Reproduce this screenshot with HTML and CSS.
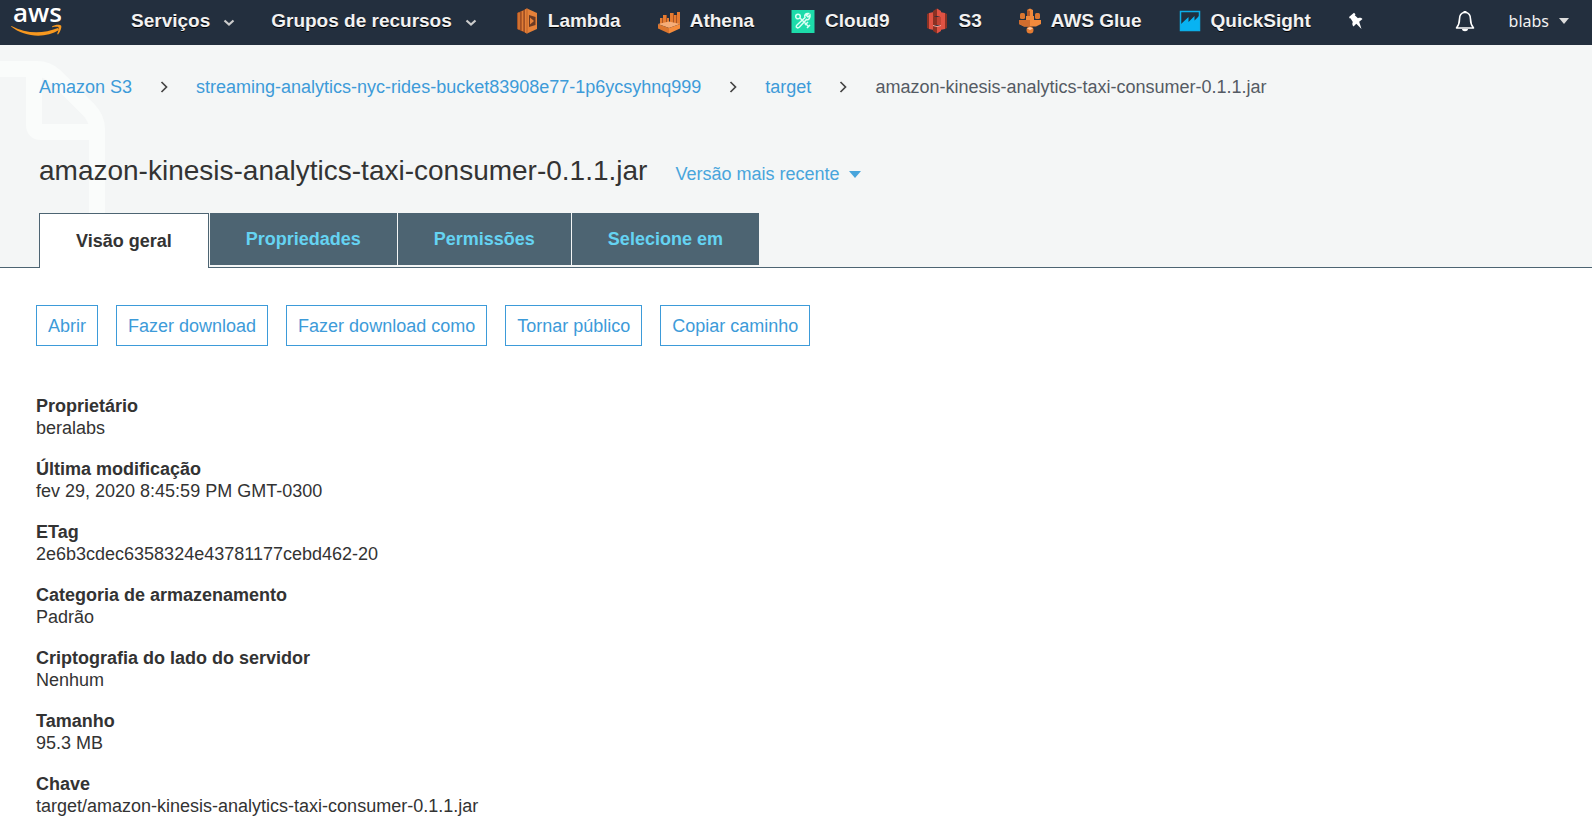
FILE: index.html
```html
<!DOCTYPE html>
<html lang="pt-BR">
<head>
<meta charset="utf-8">
<meta name="viewport" content="width=device-width, initial-scale=1">
<title>Amazon S3</title>
<link rel="stylesheet" href="styles.css">
</head>
<body>
<header class="topbar">
  <a class="logo" href="#" aria-label="AWS">
    <svg width="54" height="38" viewBox="0 0 54 38">
      <text class="logo-text" x="3" y="20">aws</text>
      <path d="M1 24.500C14 35 35 37 49 28l-1-2C33 32 16 32 1.500 24z" fill="#f7981f"/>
      <path d="M42 24.500c3-2 8-2 9-1 1 1-.3 6-3 9l-.8-.4c1-2.500 2-6 1.300-6.800-.8-.7-4-.4-6.300-.1z" fill="#f7981f"/>
    </svg>
  </a>
  <nav class="menus" aria-label="Principal">
    <button class="menu" type="button">Serviços
      <svg class="chev" width="12" height="8" viewBox="0 0 12 8"><path d="M1.500 1.500 6 5.500l4.500-4" fill="none" stroke="#ccc" stroke-width="2.200"/></svg>
    </button>
    <button class="menu" type="button">Grupos de recursos
      <svg class="chev" width="12" height="8" viewBox="0 0 12 8"><path d="M1.500 1.500 6 5.500l4.500-4" fill="none" stroke="#ccc" stroke-width="2.200"/></svg>
    </button>
  </nav>
  <nav class="shortcuts" aria-label="Atalhos">
    <a class="shortcut" href="#">
      <svg width="22" height="26" viewBox="0 0 22 26"><path d="M1 5l10-4.500v25L1 21z" fill="#a35024"/><path d="M3 4.500v17M6.500 3v20" stroke="#e07c35" stroke-width="1.500"/><path d="M9 1.500l2-1L21 5v16l-10 4.500-2-1z" fill="#e58139"/><path d="M11 .5v25" stroke="#bf6329"/><path d="M13 7l6.500 2v8L13 19z" fill="#6b3a24"/><path d="M14 9.500l4 3.500-4 3.500z" fill="#e58139"/></svg>
      Lambda</a>
    <a class="shortcut" href="#">
      <svg width="22" height="26" viewBox="0 0 22 26"><path d="M2 10h2v7l-2-1zM5 7h3v11l-3-1zM9 10h2v8H9zM12 5h3v12l-3 1zM16 7h2v10h-2zM19 4h3v12h-3z" fill="#e57c32"/><path d="M4.500 10v7M8.500 7v11M15.500 5v12M18.500 7v9" stroke="#a85424"/><path d="M0 16l11-2.500L22 16l-11 4z" fill="#f6ad78"/><path d="M0 16l11 4v5.500L0 20.500z" fill="#db762f"/><path d="M11 20l11-4v4.500l-11 5z" fill="#f58c3c"/></svg>
      Athena</a>
    <a class="shortcut" href="#">
      <svg width="24" height="26" viewBox="0 0 24 26"><path d="M.5 2h23v23H.5z" fill="#1ddbaa"/><g fill="none" stroke="#d8fff3" stroke-width="1.500"><circle cx="7" cy="8.500" r="2.300"/><path d="M9 10l8 8M16 20l3-3M14 17l3-3"/><path d="M19 7l-2 2-1.500-1.500 2-2c-3-.5-4.500 2-3.500 4L6 17c-2 2 .5 4 2.500 2l7-7.500c2 1 4-1.500 3.500-4.500z"/></g></svg>
      Cloud9</a>
    <a class="shortcut" href="#">
      <svg width="22" height="26" viewBox="0 0 22 26"><path d="M1 6l2-1v16l-2-1z" fill="#8c3123"/><path d="M3 5l5-1v18l-5-1z" fill="#e05243"/><path d="M21 6l-2-1v16l2-1z" fill="#8c3123"/><path d="M19 5l-5-1v18l5-1z" fill="#e05243"/><path d="M7 3l4-2.500V8L7 9z" fill="#8c3123"/><path d="M11 .5L15 3v6l-4-1z" fill="#e05243"/><path d="M7 9h4v8H7z" fill="#8c3123"/><path d="M11 9h4v8h-4z" fill="#c24334"/><path d="M7 17l4 1 4-1v2H7z" fill="#f3a99e"/><path d="M7 18l4 1v6.500L7 23z" fill="#8c3123"/><path d="M11 19l4-1v5l-4 2.500z" fill="#e05243"/></svg>
      S3</a>
    <a class="shortcut" href="#">
      <svg width="22" height="26" viewBox="0 0 22 26"><path d="M0 12h22v4l-5 2.500H5L0 16z" fill="#f28a3c"/><path d="M0 12h11v6.500H5L0 16z" fill="#d06d2e"/><rect x="1" y="5" width="5" height="6" rx="1.500" fill="#db7630"/><rect x="16" y="5" width="5" height="6" rx="1.500" fill="#db7630"/><path d="M8 2l3-1.500L14 2v9H8z" fill="#f28a3c"/><path d="M8 2l3 1v8H8z" fill="#b65a27"/><path d="M7 8h8v4H7z" fill="#f28a3c"/><circle cx="11" cy="22" r="3.500" fill="#e57c32"/><path d="M8 20.500l3-1.500 3 1.500-3 1.500z" fill="#ffc79d"/></svg>
      AWS Glue</a>
    <a class="shortcut" href="#">
      <svg width="22" height="26" viewBox="0 0 22 26"><path d="M1.500 3.500h19v19h-19z" fill="#20303f" stroke="#0caee8" stroke-width="1.500"/><path d="M2 16l7.500-7v5l6-6v4.500L20 8v14H2z" fill="#08b3f2"/></svg>
      QuickSight</a>
    <button class="pin" type="button" aria-label="Fixar atalhos">
      <svg width="16" height="18" viewBox="0 0 16 18"><path d="M1 5L6 .8l1.500 1.500-.7 1L10 6.200c1.500-.8 3.500-.5 4.500.8l-3.300 2.800L13.500 17 8.300 11.800 5.500 14.500C4.200 13.300 4 11.500 4.800 10L2.500 6.300 1.800 6.500z" fill="#fff"/></svg>
    </button>
  </nav>
  <div class="account">
    <button class="bell" type="button" aria-label="Notificações">
      <svg width="20" height="22" viewBox="0 0 20 22"><path d="M10 2.500c-4 0-5.500 3-5.500 6.500 0 5-1 6.500-3 9h17c-2-2.500-3-4-3-9 0-3.500-1.500-6.500-5.500-6.500z" fill="none" stroke="#fff" stroke-width="1.600" stroke-linejoin="round"/><path d="M8.500 1h3v2h-3zM7 19h6c0 3-6 3-6 0z" fill="#fff"/></svg>
    </button>
    <button class="user" type="button">blabs
      <svg width="10" height="6" viewBox="0 0 10 6"><path d="M0 0h10L5 6z" fill="#ddd"/></svg>
    </button>
  </div>
</header>
<main>
  <section class="hero">
    <svg class="file-art" width="106" height="162" viewBox="0 0 106 162" aria-hidden="true"><path d="M0 8h37q10 0 18 7l33 33q9 9 9 20v102M34 8v56q0 7 7 7h56" fill="none" stroke="#fafcfb" stroke-width="16"/></svg>
    <nav class="crumbs" aria-label="Localização">
      <a href="#">Amazon S3</a>
      <svg class="sep" width="8" height="12" viewBox="0 0 8 12"><path d="M1.500 1l5 5-5 5" fill="none" stroke="#444" stroke-width="1.700"/></svg>
      <a href="#">streaming-analytics-nyc-rides-bucket83908e77-1p6ycsyhnq999</a>
      <svg class="sep" width="8" height="12" viewBox="0 0 8 12"><path d="M1.500 1l5 5-5 5" fill="none" stroke="#444" stroke-width="1.700"/></svg>
      <a href="#">target</a>
      <svg class="sep" width="8" height="12" viewBox="0 0 8 12"><path d="M1.500 1l5 5-5 5" fill="none" stroke="#444" stroke-width="1.700"/></svg>
      <span>amazon-kinesis-analytics-taxi-consumer-0.1.1.jar</span>
    </nav>
    <div class="heading">
      <h1>amazon-kinesis-analytics-taxi-consumer-0.1.1.jar</h1>
      <button class="version" type="button">Versão mais recente
        <svg width="12" height="7" viewBox="0 0 12 7"><path d="M0 0h12L6 7z" fill="#48a5dc"/></svg>
      </button>
    </div>
    <div class="tabs" role="tablist">
      <button class="tab active" type="button" role="tab" aria-selected="true">Visão geral</button>
      <button class="tab" type="button" role="tab" aria-selected="false">Propriedades</button>
      <button class="tab" type="button" role="tab" aria-selected="false">Permissões</button>
      <button class="tab" type="button" role="tab" aria-selected="false">Selecione em</button>
    </div>
  </section>
  <section class="content">
    <div class="actions">
      <button class="action" type="button">Abrir</button>
      <button class="action" type="button">Fazer download</button>
      <button class="action" type="button">Fazer download como</button>
      <button class="action" type="button">Tornar público</button>
      <button class="action" type="button">Copiar caminho</button>
    </div>
    <dl class="details">
      <div><dt>Proprietário</dt><dd>beralabs</dd></div>
      <div><dt>Última modificação</dt><dd>fev 29, 2020 8:45:59 PM GMT-0300</dd></div>
      <div><dt>ETag</dt><dd>2e6b3cdec6358324e43781177cebd462-20</dd></div>
      <div><dt>Categoria de armazenamento</dt><dd>Padrão</dd></div>
      <div><dt>Criptografia do lado do servidor</dt><dd>Nenhum</dd></div>
      <div><dt>Tamanho</dt><dd>95.3 MB</dd></div>
      <div><dt>Chave</dt><dd>target/amazon-kinesis-analytics-taxi-consumer-0.1.1.jar</dd></div>
    </dl>
  </section>
</main>
</body>
</html>
```
FILE: styles.css
```css
* { box-sizing: border-box; }
body {
  margin: 0;
  background: #fff;
  color: #333;
  font: 18px/22px "Liberation Sans", Arial, sans-serif;
}
button {
  margin: 0;
  padding: 0;
  border: 0;
  background: none;
  color: inherit;
  font: inherit;
  white-space: nowrap;
  cursor: pointer;
}
a { color: #3d9bd9; text-decoration: none; }
svg { display: block; flex: none; }

.topbar {
  display: flex;
  align-items: center;
  height: 45px;
  padding: 0 23px 4px 10px;
  background: #232f3e;
  color: #f2f2f2;
}
.logo { margin-right: 67px; }
.logo svg { overflow: visible; }
.logo-text {
  fill: #fff;
  font: 600 26px "Open Sans", sans-serif;
}
.menus { display: flex; gap: 36px; margin-right: 39px; }
.menu {
  display: flex;
  align-items: center;
  gap: 13px;
  font-size: 19px;
  font-weight: 700;
  text-shadow: 0 1px 0 #000;
}
.chev { margin-top: 4px; }
.shortcuts { display: flex; align-items: center; gap: 37px; }
.shortcut {
  display: flex;
  align-items: center;
  gap: 10px;
  color: #f2f2f2;
  font-size: 19px;
  font-weight: 700;
  white-space: nowrap;
  text-shadow: 0 1px 0 #000;
}
.account {
  display: flex;
  align-items: center;
  gap: 34px;
  margin-left: auto;
}
.user {
  display: flex;
  align-items: center;
  gap: 10px;
  font-family: "Noto Sans", sans-serif;
  font-size: 16px;
}

.hero {
  position: relative;
  padding: 31px 39px 0;
  background: #f4f6f6;
  border-bottom: 1px solid #4d6472;
}
.file-art { position: absolute; left: 0; top: 16px; }
.crumbs, .heading, .tabs { position: relative; display: flex; }
.crumbs { align-items: center; gap: 28px; color: #545b64; }
.heading {
  align-items: baseline;
  gap: 28px;
  margin-top: 55px;
}
h1 { margin: 0; font-size: 28px; font-weight: 400; line-height: 36px; }
.version {
  display: flex;
  align-items: center;
  gap: 9px;
  color: #48a5dc;
}
.tabs { align-items: flex-start; gap: 1px; margin: 24px 0 -1px; }
.tab {
  height: 52px;
  padding: 0 36px;
  background: #4d6472;
  color: #65d3f2;
  font-weight: 700;
}
.tab.active {
  height: 55px;
  border: 1px solid #4d6472;
  border-bottom: 0;
  background: #fff;
  color: #333;
}

.content { padding: 37px 36px 20px; }
.actions { display: flex; gap: 18px; }
.action {
  height: 41px;
  padding: 0 11px;
  border: 1px solid #3d9bd9;
  background: #fff;
  color: #3d9bd9;
}
.details { display: grid; gap: 19px; margin: 49px 0 0; }
dt { font-weight: 700; }
dd { margin: 0; }
```
